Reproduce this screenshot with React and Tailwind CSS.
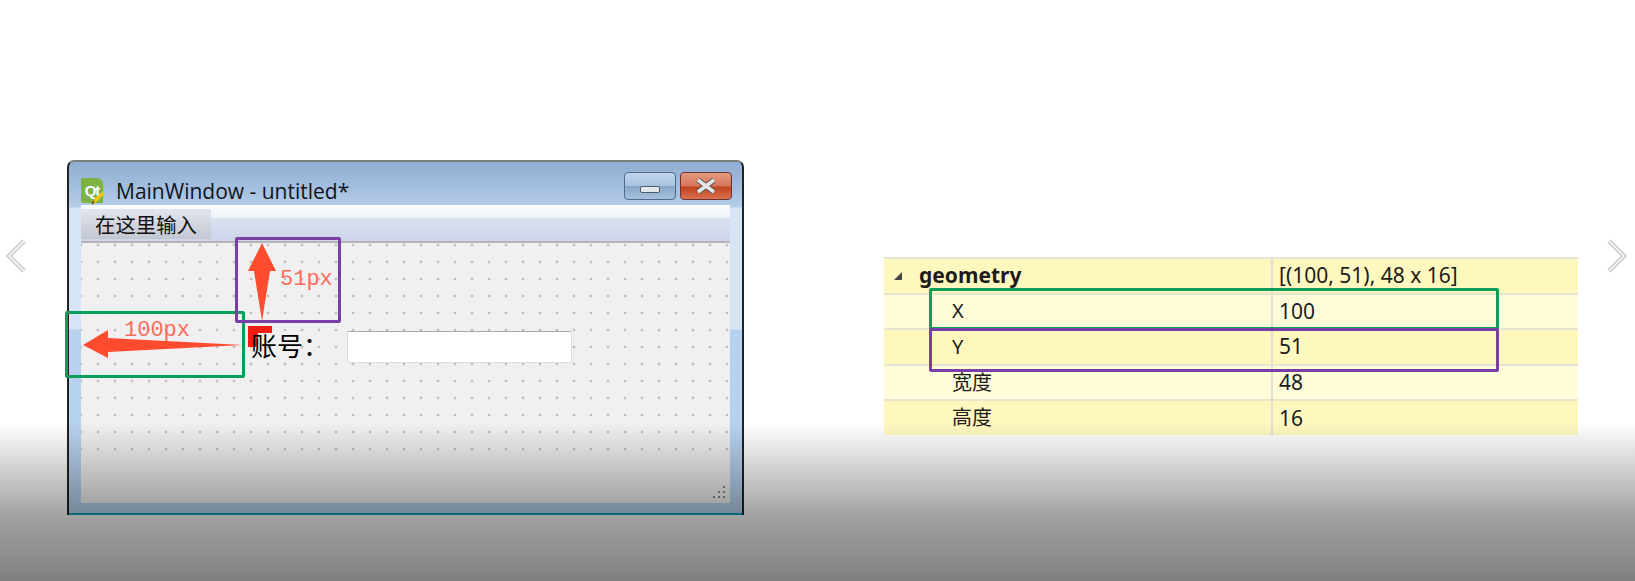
import React from 'react';

const rows = [
  { name: 'geometry', value: '[(100, 51), 48 x 16]', bg: 'bg-[#fff8be]', head: true },
  { name: 'X', value: '100', bg: 'bg-[#fffcd9]' },
  { name: 'Y', value: '51', bg: 'bg-[#fff8be]' },
  { name: '宽度', value: '48', bg: 'bg-[#fffcd9]' },
  { name: '高度', value: '16', bg: 'bg-[#fff8be]' },
];

const fontTable = "font-['Noto_Sans','Noto_Sans_CJK_SC',sans-serif]";

const Chevron = ({ points, className }) => (
  <svg className={className} width="24" height="40" viewBox="0 0 24 40" fill="none">
    <polyline points={points} stroke="#c9c9c9" strokeWidth="4.5" />
    <polyline points={points} stroke="#fbfbfb" strokeWidth="1.6" />
  </svg>
);

const QtLogo = () => (
  <div className="relative w-[24px] h-[27px] shrink-0">
    <div className="w-[22px] h-[25px] rounded-tr-[6px] rounded-bl-[3px] bg-[#7cb342] flex items-center justify-center overflow-hidden">
      <span className="text-white text-[15px] font-bold leading-none tracking-[-1px] font-['Liberation_Sans',sans-serif]">Qt</span>
    </div>
    <svg className="absolute left-[10px] top-[12px]" width="15" height="15" viewBox="0 0 15 15">
      <path d="M2 13 L12 3" stroke="#f2c318" strokeWidth="3.2" />
      <path d="M1 14 L3 11" stroke="#5c4a10" strokeWidth="1.6" />
    </svg>
  </div>
);

const WindowButtons = () => (
  <div className="flex gap-[4px]">
    <div className="w-[52px] h-[28px] rounded-[4px] border border-[#4f6a8c] bg-[linear-gradient(to_bottom,#c0d5ec_0%,#a9c3e1_48%,#89a8c9_52%,#a5c0dd_100%)] flex items-end justify-center pb-[6px]">
      <div className="w-[20px] h-[7px] rounded-[2px] border border-[#4c5a6b] bg-[#e4e8ec]" />
    </div>
    <div className="w-[52px] h-[28px] rounded-[4px] border border-[#6b3238] bg-[linear-gradient(to_bottom,#e39a80_0%,#d9785c_48%,#c2441e_55%,#d9714f_100%)] flex items-center justify-center">
      <svg width="24" height="16" viewBox="0 0 24 16">
        <path d="M4 2 L20 14 M20 2 L4 14" stroke="#555" strokeWidth="5.5" />
        <path d="M4 2 L20 14 M20 2 L4 14" stroke="#e6e6e6" strokeWidth="3.5" />
      </svg>
    </div>
  </div>
);

const Designer = () => (
  <div className="relative shrink-0 w-[677px] h-[355px] mt-[160px] border-2 border-b-0 border-[#222] border-t-[#7d7d7d] rounded-t-[7px] bg-[linear-gradient(to_bottom,#8fadd2_0px,#b4cde8_45px,#d6e5f5_46px,#d6e5f5_167px,#b7d2ef_168px,#b7d2ef_100%)]">
    <div className="h-[43px] pl-[12px] pr-[10px] flex items-end">
      <div className="flex items-center gap-[11px] flex-1">
        <QtLogo />
        <span className="text-[21px] leading-none text-[#10151c] font-['Open_Sans',sans-serif]">MainWindow - untitled*</span>
      </div>
      <div className="self-start mt-[10px]">
        <WindowButtons />
      </div>
    </div>

    <div className="mx-[12px] flex flex-col h-[298px]">
      <div className="h-[38px] shrink-0 border-b-2 border-[#b4b4b8] bg-[linear-gradient(to_bottom,#fbfdff_0px,#eef3fb_12px,#d9e1f0_14px,#ccd5e8_100%)] flex items-center">
        <div className="w-[130px] h-[30px] mt-[2px] bg-[linear-gradient(to_bottom,#e2e5ec,#c3c7d3)] flex items-center pl-[14px] text-[20.4px] leading-none text-[#111] font-['Noto_Sans_CJK_SC',sans-serif]">
          在这里输入
        </div>
      </div>

      <div className="flex-1 bg-[#f0f0f0] bg-[radial-gradient(circle,#777_0.8px,transparent_1.1px)] bg-[size:17px_17px] bg-[position:-8.5px_-6.5px] pt-[88px] pl-[168px]">
        <div className="flex items-center">
          <div className="relative w-[98px] h-[32px] flex items-center">
            <div className="absolute left-[-1px] top-[-5px] w-[24px] h-[7px] bg-[#f01f14]" />
            <div className="absolute left-[-1px] top-[-5px] w-[10px] h-[21px] bg-[#f01f14]" />
            <span className="relative left-[2px] top-[-2px] text-[26px] leading-none text-black font-['Noto_Sans_CJK_SC',sans-serif]">账号：</span>
          </div>
          <div className="w-[225px] h-[32px] bg-white border border-[#dcdcdc] border-t-[#a8a8a8] rounded-[2px]" />
        </div>
      </div>

      <div className="relative h-[44px] shrink-0 bg-[#f0f0f0]">
        <svg className="absolute right-[4px] bottom-[3px]" width="14" height="14" viewBox="0 0 14 14" fill="#8a8a8a">
          <rect x="11" y="0" width="2" height="2" />
          <rect x="11" y="5" width="2" height="2" />
          <rect x="6" y="5" width="2" height="2" />
          <rect x="11" y="10" width="2" height="2" />
          <rect x="6" y="10" width="2" height="2" />
          <rect x="1" y="10" width="2" height="2" />
        </svg>
      </div>
    </div>
    <div className="h-[12px] border-b-2 border-[#0aa7c4]" />

    {/* annotations */}
    <div className="absolute left-[-4px] top-[149px] w-[180px] h-[67px] border-[3px] border-[#0b9e5b] rounded-[2px]" />
    <div className="absolute left-[166px] top-[75px] w-[106px] h-[86px] border-[3px] border-[#7a3fa6] rounded-[2px]" />
    <svg className="absolute left-[12px] top-[78px]" width="265" height="140" viewBox="0 0 265 140" fill="#ff4b2e">
      <polygon points="181,3 195,31 189,31 181,81 173,31 167,31" />
      <polygon points="2,105 27,90 27,98 162,105 27,112 27,118" />
    </svg>
    <span className="absolute left-[55px] top-[156px] text-[22px] leading-[26px] text-[#ff6a5a] font-['Liberation_Mono',monospace]">100px</span>
    <span className="absolute left-[211px] top-[105px] text-[22px] leading-[26px] text-[#ff6a5a] font-['Liberation_Mono',monospace]">51px</span>
  </div>
);

const PropertyTable = () => (
  <div className={`relative shrink-0 w-[694px] mt-[257px] ${fontTable}`}>
    {rows.map((row) => (
      <div
        key={row.name}
        className={`grid grid-cols-[389px_1fr] h-[35.6px] border-t-2 border-[#e8e4d2] text-[#1c1c1c] ${row.bg}`}
      >
        <div className="flex items-center border-r-2 border-[#e2dfd0]">
          {row.head ? (
            <>
              <svg className="ml-[9px]" width="10" height="10" viewBox="0 0 10 10" fill="#444">
                <polygon points="9,1 9,9 1,9" />
              </svg>
              <span className="ml-[16px] text-[21px] font-bold leading-none">{row.name}</span>
            </>
          ) : (
            <span className="ml-[68px] text-[20px] leading-none">{row.name}</span>
          )}
        </div>
        <div className="flex items-center pl-[6px] text-[21px] leading-none">{row.value}</div>
      </div>
    ))}

    <div className="absolute left-[45px] top-[31px] w-[570px] h-[42px] border-[3px] border-[#0b9e5b] rounded-[2px]" />
    <div className="absolute left-[45px] top-[71px] w-[570px] h-[44px] border-[3px] border-[#7a3fa6] rounded-[2px]" />
  </div>
);

export default function App() {
  return (
    <div className="relative w-full h-[581px] overflow-hidden bg-white flex items-start pl-[67px]">
      <Designer />
      <div className="ml-[140px]">
        <PropertyTable />
      </div>

      <Chevron className="absolute left-[4px] top-[236px]" points="20,5 5,20 20,35" />
      <Chevron className="absolute left-[1604px] top-[236px]" points="5,5 20,20 5,35" />

      <div className="absolute left-0 right-0 bottom-0 h-[159px] pointer-events-none bg-[linear-gradient(to_bottom,rgba(0,0,0,0),rgba(0,0,0,0.06)_10%,rgba(0,0,0,0.36)_58%,rgba(0,0,0,0.5))]" />
    </div>
  );
}
